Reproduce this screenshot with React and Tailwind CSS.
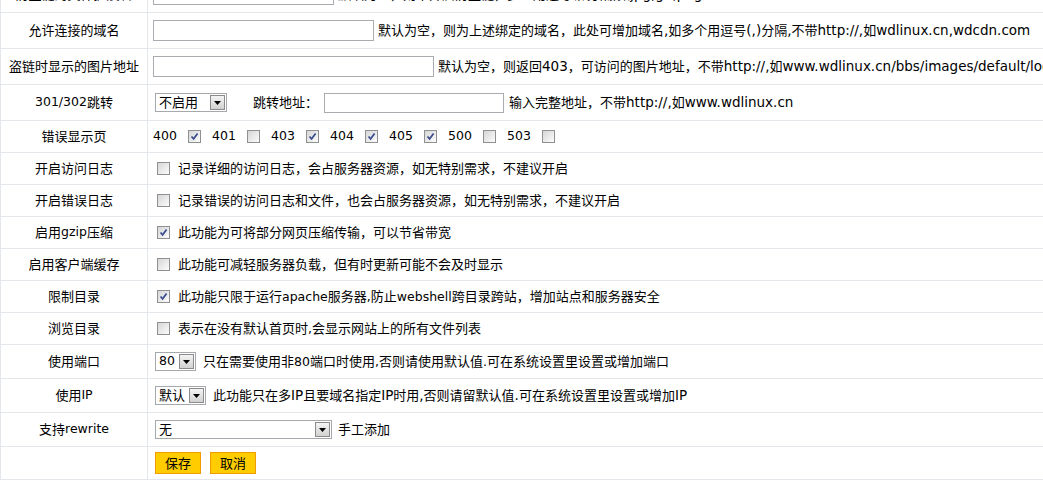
import React from 'react';

// latin runs are ~12.5px (13.5px where the url text runs wide), CJK runs 13px
const T = ({ children, big }) => {
  const parts = String(children).split(/([\x20-\x7e]+)/);
  return parts.map((p, i) =>
    /^[\x20-\x7e]+$/.test(p) ? (
      <span key={i} className={big ? 'text-[13.5px]' : 'text-[12.5px]'}>{p}</span>
    ) : (
      p
    )
  );
};

const Row = ({ label, h, children }) => (
  <div className={`flex border-b border-[#e3e6eb] ${h}`}>
    <div className="w-[147px] shrink-0 border-r border-[#e3e6eb] flex items-center justify-center whitespace-nowrap">
      <T>{label}</T>
    </div>
    <div className="flex items-center pl-[5px] whitespace-nowrap">{children}</div>
  </div>
);

const TextBox = ({ className }) => (
  <input type="text" className={`border border-[#a9abb0] bg-white outline-none ${className}`} />
);

const Select = ({ value, className }) => (
  <div className={`ml-[2px] h-[19px] flex items-stretch border border-[#a5a9ae] bg-white ${className}`}>
    <div className="flex-1 flex items-center pl-[3px] leading-none">
      <T>{value}</T>
    </div>
    <div className="m-px w-[15px] border border-[#8b8b8b] bg-gradient-to-b from-[#f4f4f4] to-[#d2d2d2] flex items-center justify-center">
      <svg width="7" height="4" viewBox="0 0 7 4">
        <path d="M0 0 L7 0 L3.5 4 Z" fill="#000" />
      </svg>
    </div>
  </div>
);

const Check = ({ checked, className = '' }) => (
  <span
    className={`inline-flex w-[13px] h-[13px] shrink-0 border border-[#8f9091] bg-gradient-to-br from-[#d6d6d6] to-[#fcfcfc] items-center justify-center ${className}`}
  >
    {checked && (
      <svg width="9" height="9" viewBox="0 0 9 9">
        <path d="M1.5 4.5 L3.6 6.8 L7.6 1.5" stroke="#3a4c8e" strokeWidth="1.7" fill="none" />
      </svg>
    )}
  </span>
);

const errorPages = [
  ['400', true],
  ['401', false],
  ['403', true],
  ['404', true],
  ['405', true],
  ['500', false],
  ['503', false],
];

const checkRows = [
  ['开启访问日志', false, '记录详细的访问日志，会占服务器资源，如无特别需求，不建议开启'],
  ['开启错误日志', false, '记录错误的访问日志和文件，也会占服务器资源，如无特别需求，不建议开启'],
  ['启用gzip压缩', true, '此功能为可将部分网页压缩传输，可以节省带宽'],
  ['启用客户端缓存', false, '此功能可减轻服务器负载，但有时更新可能不会及时显示'],
  ['限制目录', true, '此功能只限于运行apache服务器,防止webshell跨目录跨站，增加站点和服务器安全'],
  ['浏览目录', false, '表示在没有默认首页时,会显示网站上的所有文件列表'],
];

export default function App() {
  return (
    <div className="w-[1043px] h-[493px] overflow-hidden bg-white text-black text-[13px] font-['DejaVu_Sans','Noto_Sans_CJK_SC',sans-serif]">
      <div className="w-[1300px] -mt-[23px] border-l border-[#e3e6eb]">
        <Row label="防盗链的文件扩展名" h="h-[36px]">
          <TextBox className="w-[181px] h-[21px]" />
          <span className="ml-[4px]">
            <T big>默认为空，则不开启防盗链，多个用逗号(,)分隔,如jpg,gif,png</T>
          </span>
        </Row>
        <Row label="允许连接的域名" h="h-[36px]">
          <TextBox className="w-[221px] h-[21px]" />
          <span className="ml-[4px]">
            <T big>默认为空，则为上述绑定的域名，此处可增加域名,如多个用逗号(,)分隔,不带http://,如wdlinux.cn,wdcdn.com</T>
          </span>
        </Row>
        <Row label="盗链时显示的图片地址" h="h-[36px]">
          <TextBox className="w-[281px] h-[21px]" />
          <span className="ml-[4px]">
            <T big>默认为空，则返回403，可访问的图片地址，不带http://,如www.wdlinux.cn/bbs/images/default/logo.gif</T>
          </span>
        </Row>
        <Row label="301/302跳转" h="h-[36px]">
          <Select value="不启用" className="w-[72px]" />
          <span className="ml-[26px]">跳转地址：</span>
          <TextBox className="ml-[6px] w-[180px] h-[20px]" />
          <span className="ml-[5px]">
            <T big>输入完整地址，不带http://,如www.wdlinux.cn</T>
          </span>
        </Row>
        <Row label="错误显示页" h="h-[32px]">
          {errorPages.map(([code, on]) => (
            <div key={code} className="w-[59px] flex items-center">
              <span className="w-[35px] text-[12.5px]">{code}</span>
              <Check checked={on} />
            </div>
          ))}
        </Row>
        {checkRows.map(([label, on, text]) => (
          <Row key={label} label={label} h="h-[32px]">
            <Check checked={on} className="ml-[4px]" />
            <span className="ml-[8px]">
              <T>{text}</T>
            </span>
          </Row>
        ))}
        <Row label="使用端口" h="h-[34px]">
          <Select value="80" className="w-[41px]" />
          <span className="ml-[7px]">
            <T>只在需要使用非80端口时使用,否则请使用默认值.可在系统设置里设置或增加端口</T>
          </span>
        </Row>
        <Row label="使用IP" h="h-[34px]">
          <Select value="默认" className="w-[51px]" />
          <span className="ml-[7px]">
            <T big>此功能只在多IP且要域名指定IP时用,否则请留默认值.可在系统设置里设置或增加IP</T>
          </span>
        </Row>
        <Row label="支持rewrite" h="h-[34px]">
          <Select value="无" className="w-[177px]" />
          <span className="ml-[6px]">手工添加</span>
        </Row>
        <Row label="" h="h-[33px]">
          <button className="ml-[2px] w-[46px] h-[22px] bg-[#ffcc00] border border-[#f39a00] text-[13px] leading-none">
            保存
          </button>
          <button className="ml-[9px] w-[46px] h-[22px] bg-[#ffcc00] border border-[#f39a00] text-[13px] leading-none">
            取消
          </button>
        </Row>
      </div>
    </div>
  );
}
